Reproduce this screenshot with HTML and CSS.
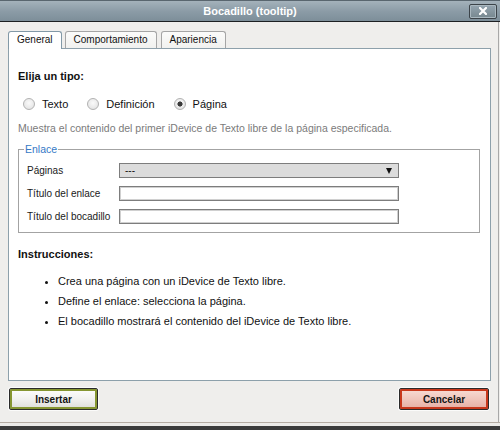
FILE: index.html
```
<!DOCTYPE html>
<html lang="es">
<head>
<meta charset="utf-8">
<title>Bocadillo (tooltip)</title>
<link rel="stylesheet" href="styles.css">
</head>
<body>
<div class="window">
  <header class="titlebar">
    <h1 class="title">Bocadillo (tooltip)</h1>
    <button class="close" type="button" aria-label="Cerrar">
      <svg width="8" height="8" viewBox="0 0 8 8"><path d="M1 1L7 7M7 1L1 7" stroke="#fff" stroke-width="2.2" stroke-linecap="square"/></svg>
    </button>
  </header>
  <div class="content">
    <nav class="tabs">
      <span class="tab active">General</span>
      <span class="tab">Comportamiento</span>
      <span class="tab">Apariencia</span>
    </nav>
    <section class="panel">
      <p class="heading">Elija un tipo:</p>
      <div class="radios">
        <label class="radio"><input type="radio" name="tipo">Texto</label>
        <label class="radio"><input type="radio" name="tipo">Definición</label>
        <label class="radio"><input type="radio" name="tipo" checked>Página</label>
      </div>
      <p class="desc">Muestra el contenido del primer iDevice de Texto libre de la página especificada.</p>
      <fieldset class="link">
        <legend>Enlace</legend>
        <div class="row"><span class="label">Páginas</span><div class="select"><span>---</span><i class="arrow"></i></div></div>
        <div class="row"><label class="label">Título del enlace</label><input class="field" type="text"></div>
        <div class="row"><label class="label">Título del bocadillo</label><input class="field" type="text"></div>
      </fieldset>
      <p class="heading instr">Instrucciones:</p>
      <ul class="steps">
        <li>Crea una página con un iDevice de Texto libre.</li>
        <li>Define el enlace: selecciona la página.</li>
        <li>El bocadillo mostrará el contenido del iDevice de Texto libre.</li>
      </ul>
    </section>
    <div class="actions">
      <button class="btn ok" type="button">Insertar</button>
      <button class="btn cancel" type="button">Cancelar</button>
    </div>
  </div>
  <div class="bottom"></div>
</div>
</body>
</html>
```
FILE: styles.css
```
* { box-sizing: border-box; }
html, body { margin: 0; padding: 0; }
body {
  width: 500px;
  height: 430px;
  overflow: hidden;
  background: #efeeec;
  font-family: "Liberation Sans", Arial, sans-serif;
  font-size: 11px;
  color: #111;
}
.window {
  display: flex;
  flex-direction: column;
  height: 430px;
}
.titlebar {
  display: grid;
  grid-template-columns: 1fr auto 1fr;
  align-items: center;
  height: 22px;
  border-top: 1px solid #59666f;
  border-bottom: 1px solid #1d2023;
  background: linear-gradient(#a4b2bb, #8c9ca7 50%, #7d8e99);
}
.title {
  grid-column: 2;
  margin: 0;
  font-size: 11px;
  font-weight: bold;
  line-height: 20px;
  color: #fff;
}
.close {
  grid-column: 3;
  justify-self: end;
  margin-right: 3px;
  width: 28px;
  height: 15px;
  padding: 0;
  display: flex;
  align-items: center;
  justify-content: center;
  border: 1px solid #3c444a;
  border-radius: 2px;
  background: linear-gradient(#95a5b0, #76878f);
  box-shadow: inset 0 0 0 1px #a9b7bf;
}
.content {
  flex: 1;
  margin-right: 1px;
  border-right: 1px solid #a8a8a8;
  padding: 9px 0 0 8px;
}
.tabs {
  display: flex;
  height: 17px;
}
.tab {
  height: 17px;
  padding: 0 8px;
  margin-right: 3px;
  font-size: 10px;
  line-height: 15px;
  border: 1px solid #a5a5a5;
  border-bottom: none;
  border-radius: 3px 3px 0 0;
  background: linear-gradient(#fbfbfa, #f1f1ef);
}
.tab + .tab + .tab { margin-left: 1px; }
.tab.active {
  height: 18px;
  background: #fff;
  border-color: #8299a7;
  position: relative;
  z-index: 1;
}
.panel {
  width: 483px;
  height: 333px;
  border: 1px solid #8da0ab;
  background: #fff;
  padding: 0 9px;
}
.heading {
  margin: 20px 0 0;
  font-weight: bold;
  line-height: 14px;
}
.radios {
  display: flex;
  align-items: center;
  gap: 19px;
  height: 16px;
  margin-top: 13px;
  padding-left: 5px;
}
.radio {
  display: flex;
  align-items: center;
  gap: 7px;
}
.radio input {
  appearance: none;
  -webkit-appearance: none;
  margin: 0;
  width: 12px;
  height: 12px;
  border: 1px solid #b2b2b2;
  border-radius: 50%;
  background: radial-gradient(circle at 50% 40%, #fafafa, #dedede);
}
.radio input:checked {
  background: radial-gradient(circle, #3a3a3a 0 2.3px, transparent 2.8px), radial-gradient(circle at 50% 40%, #fafafa, #dedede);
}
.desc {
  margin: 9px 0 0;
  font-size: 10.5px;
  line-height: 14px;
  color: #7b7b7b;
}
.link {
  margin: 7px 0 0;
  width: 462px;
  min-width: 0;
  padding: 7px 0 8px 8px;
  border: 1px solid #a3a3a3;
}
.link legend {
  padding: 0 1px;
  margin-left: -3px;
  font-size: 10.5px;
  line-height: 14px;
  color: #3579c6;
}
.row {
  display: flex;
  align-items: center;
  height: 15px;
  font-size: 10px;
}
.row + .row { margin-top: 8px; }
.label {
  width: 92px;
  color: #1a1a1a;
}
.field, .select {
  width: 280px;
  height: 15px;
  margin: 0;
  border: 1px solid #7d7d7d;
  box-shadow: inset 0 0 0 1px #d0d0d0;
  font: inherit;
}
.field { background: #fff; padding: 0 3px; }
.select {
  display: flex;
  align-items: center;
  justify-content: space-between;
  padding: 0 6px 0 5px;
  background: #dcdcdc;
  box-shadow: none;
}
.arrow {
  width: 0;
  height: 0;
  border-left: 3px solid transparent;
  border-right: 3px solid transparent;
  border-top: 6px solid #111;
}
.instr { margin-top: 14px; }
.steps {
  margin: 13px 0 0;
  padding-left: 40px;
}
.steps li { line-height: 14px; }
.steps li + li { margin-top: 6px; }
.actions {
  display: flex;
  justify-content: space-between;
  padding: 7px 9px 0 1px;
}
.btn {
  width: 89px;
  height: 22px;
  padding: 0;
  font-family: "Liberation Sans", Arial, sans-serif;
  font-size: 10px;
  font-weight: bold;
  color: #141414;
  border: 1px solid #2b2b2b;
  border-radius: 2px;
}
.ok {
  background: linear-gradient(#fefefe, #f1f1ef 50%, #dcdcd8);
  box-shadow: inset 0 0 0 2px #869632, 0 0 0 1px #fbfbfa;
}
.cancel {
  width: 90px;
  background: linear-gradient(#f8dcd5, #f0c6bc 50%, #e5aea3);
  box-shadow: inset 0 0 0 2px #c8381c, 0 0 0 1px #fbfbfa;
}
.bottom {
  height: 8px;
  border-top: 1px solid #b4aba2;
  border-bottom: 4px solid #3b3b3b;
  background: #ecebe8;
}
```
